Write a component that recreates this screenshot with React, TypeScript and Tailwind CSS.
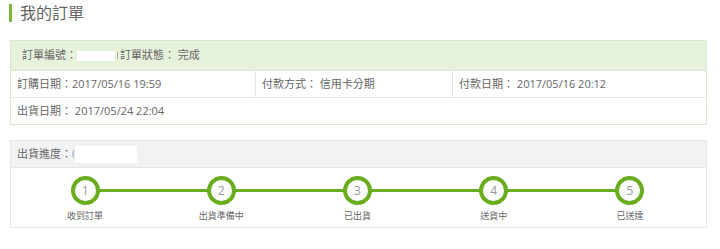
import React from "react";

const steps = ["收到訂單", "出貨準備中", "已出貨", "送貨中", "已送達"];

export default function App() {
  return (
    <div
      className="w-[720px] h-[249px] bg-white text-[#666]"
      style={{ fontFamily: '"Open Sans", "Noto Sans CJK TC", sans-serif' }}
    >
      <div className="flex items-center pt-[4px] pl-[9px] gap-[8px]">
        <div className="w-[3px] h-[18px] bg-[#7cb83a]" />
        <div className="text-[16px] leading-[18px] text-[#666]">我的訂單</div>
      </div>

      <div className="ml-[10px] mt-[18px] w-[697px] border border-[#dbe8cf] text-[11px]">
        <div className="h-[30px] bg-[#e7f2dc] border-b border-[#dbe8cf] flex items-center pl-[11px]">
          <span>訂單編號：</span>
          <span className="inline-block w-[38px] h-[10px] bg-white" />
          <span className="inline-block w-[1px] h-[7px] bg-[#aaa] mx-[2px]" />
          <span>訂單狀態： 完成</span>
        </div>
        <div className="flex h-[27px] border-b border-[#e6e6e6]">
          <div className="w-[245px] border-r border-[#e6e6e6] flex items-center pl-[6px]">
            訂購日期：2017/05/16 19:59
          </div>
          <div className="w-[197px] border-r border-[#e6e6e6] flex items-center pl-[6px]">
            付款方式： 信用卡分期
          </div>
          <div className="flex-1 flex items-center pl-[6px]">付款日期： 2017/05/16 20:12</div>
        </div>
        <div className="h-[26px] flex items-center pl-[6px]">出貨日期： 2017/05/24 22:04</div>
      </div>

      <div className="ml-[10px] mt-[15px] w-[697px] border border-[#e6e6e6]">
        <div className="h-[27px] bg-[#f2f2f2] border-b border-[#e6e6e6] flex items-center pl-[6px] text-[11px]">
          <span>出貨進度：</span>
          <span className="text-[#6b9bd1] text-[9px]">(</span>
          <span className="inline-block w-[62px] h-[17px] bg-white" />
        </div>
        <div className="h-[59px] relative flex ml-[6px] mr-[8px] pt-[8px]">
          <div className="absolute left-[10%] right-[10%] top-[21px] h-[3px] bg-[#6aad1f]" />
          {steps.map((s, i) => (
            <div key={s} className="flex-1 flex flex-col items-center relative">
              <div className="w-[29px] h-[29px] rounded-full border-[4px] border-[#6aad1f] bg-white flex items-center justify-center text-[12px] text-[#999]">
                {i + 1}
              </div>
              <div className="mt-[5px] text-[9px] leading-[12px] text-[#666]">{s}</div>
            </div>
          ))}
        </div>
      </div>
    </div>
  );
}
